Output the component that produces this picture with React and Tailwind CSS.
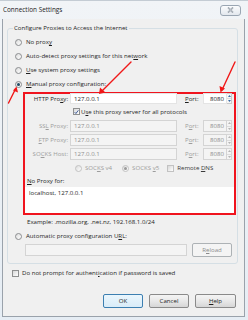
import React from "react";

const font = { fontFamily: '"Open Sans", "Noto Sans", sans-serif' };

function U({ children }) {
  return <span className="underline underline-offset-[1px] decoration-[0.5px]">{children}</span>;
}

function Radio({ checked, disabled }) {
  return (
    <span
      className={`flex w-[7px] h-[7px] shrink-0 items-center justify-center rounded-full border bg-gradient-to-br from-[#dcdcdc] to-[#ffffff] ${
        disabled ? "border-[#c2c2c2]" : "border-[#8b8d8f]"
      }`}
    >
      {checked && (
        <span
          className={`w-[3px] h-[3px] rounded-full ${
            disabled ? "bg-[#9a9a9a]" : "bg-[#1f4a63]"
          }`}
        />
      )}
    </span>
  );
}

function Check({ checked, disabled }) {
  return (
    <span
      className={`flex w-[7px] h-[7px] shrink-0 items-center justify-center border bg-gradient-to-br from-[#d8d8d8] to-[#ffffff] ${
        disabled ? "border-[#c2c2c2]" : "border-[#8e8f8f]"
      }`}
    >
      {checked && (
        <svg width="6" height="6" viewBox="0 0 6 6">
          <path d="M0.8 3.2 L2.3 4.8 L5.2 1" fill="none" stroke="#2f4f8f" strokeWidth="1.1" />
        </svg>
      )}
    </span>
  );
}

function Spinner({ disabled }) {
  const c = disabled ? "#b5b5b5" : "#3c6ea8";
  return (
    <span
      className={`flex h-full w-[5px] flex-col border border-l-0 ${
        disabled ? "border-[#d6d6d6] bg-[#f4f4f4]" : "border-[#c9c9c9] bg-[#f6f6f6]"
      }`}
    >
      <span className="flex flex-1 items-center justify-center border-b border-[#dcdcdc]">
        <svg width="3" height="2" viewBox="0 0 3 2">
          <path d="M0 2 L1.5 0 L3 2Z" fill={c} />
        </svg>
      </span>
      <span className="flex flex-1 items-center justify-center">
        <svg width="3" height="2" viewBox="0 0 3 2">
          <path d="M0 0 L1.5 2 L3 0Z" fill={c} />
        </svg>
      </span>
    </span>
  );
}

function ProxyRow({ label, disabled, first }) {
  return (
    <div className={`flex items-center ${first ? "h-[11px] -mt-[1px]" : "h-[14px]"}`}>
      <span
        className={`w-[43px] text-right whitespace-nowrap ${
          disabled ? "text-[#9d9d9d]" : "text-[#1e1e1e]"
        }`}
      >
        {label}
      </span>
      <span
        className={`ml-[2px] flex w-[107px] items-center px-[3px] ${
          first
            ? "h-[11px] bg-white border border-[#e4e4e4] text-[#1e1e1e]"
            : "h-[12px] bg-[#f4f4f4] border border-[#d4d4d4] text-[#8e8e8e]"
        }`}
      >
        127.0.0.1
      </span>
      <span
        className={`ml-[8px] w-[18px] whitespace-nowrap ${
          disabled ? "text-[#9d9d9d]" : "text-[#1e1e1e]"
        }`}
      >
        {disabled ? (
          <>
            P<U>o</U>rt:
          </>
        ) : (
          <>
            <U>P</U>ort:
          </>
        )}
      </span>
      <span className={`flex ${first ? "h-[11px]" : "h-[12px]"}`}>
        <span
          className={`flex w-[24px] items-center justify-end pr-[2px] ${
            first
              ? "bg-white border border-[#e4e4e4] text-[#1e1e1e]"
              : "bg-[#f4f4f4] border border-[#d4d4d4] text-[#8e8e8e]"
          }`}
        >
          8080
        </span>
        <Spinner disabled={disabled} />
      </span>
    </div>
  );
}

function Button({ children, primary, disabled, className = "" }) {
  return (
    <span
      className={`flex h-[14px] items-center justify-center rounded-[2px] border ${
        primary
          ? "border-[#3c7fb1] bg-gradient-to-b from-[#eaf6fd] to-[#d9ecf8]"
          : disabled
          ? "border-[#adb2b5] bg-[#f4f4f4] text-[#8b8b8b]"
          : "border-[#8a8a8a] bg-gradient-to-b from-[#f4f4f4] via-[#e8e8e8] to-[#d6d6d6]"
      } ${className}`}
    >
      {children}
    </span>
  );
}

export default function App() {
  return (
    <div
      className="relative h-[320px] w-[248px] overflow-hidden bg-gradient-to-b from-[#f1f4f7] to-[#e6edf4] text-[6.1px] leading-[8px] text-[#1e1e1e]"
      style={font}
    >
      {/* title bar */}
      <div className="flex h-[19px] items-center border-t border-[#c4ccd4] pl-[3px] pr-[7px]">
        <span className="text-[6.4px] text-[#1b1b1b]">Connection Settings</span>
        <span className="ml-auto flex h-[11px] w-[21px] items-center justify-center rounded-[3px] border border-[#9aa6b3] bg-gradient-to-b from-[#fbfcfd] to-[#e3e8ee]">
          <svg width="7" height="6" viewBox="0 0 7 6">
            <path d="M1 0.5 L6 5.5 M6 0.5 L1 5.5" stroke="#8c96a0" strokeWidth="1.6" />
            <path d="M1 0.5 L6 5.5 M6 0.5 L1 5.5" stroke="#f4f6f8" strokeWidth="0.5" />
          </svg>
        </span>
      </div>

      {/* dialog body */}
      <div className="ml-[2px] flex h-[298px] w-[243px] flex-col border-x border-b border-[#9aa2ab] bg-[#f0f0f0]">
        <fieldset className="ml-[4px] mt-[5px] w-[231px] rounded-[3px] border border-[#d5dfe5] pb-[6px] pt-[3px]">
          <legend className="ml-[5px] px-[1px] leading-[8px]">
            Configure Proxies to Access the Internet
          </legend>

          <div className="flex h-[14px] items-center pl-[7px]">
            <Radio />
            <span className="ml-[4px]">
              No prox<U>y</U>
            </span>
          </div>
          <div className="flex h-[14px] items-center pl-[7px]">
            <Radio />
            <span className="ml-[4px]">
              Auto-detect proxy settings for this net<U>w</U>ork
            </span>
          </div>
          <div className="flex h-[14px] items-center pl-[7px]">
            <Radio />
            <span className="ml-[4px]">
              <U>U</U>se system proxy settings
            </span>
          </div>
          <div className="flex h-[14px] items-center pl-[7px]">
            <Radio checked />
            <span className="ml-[4px]">
              <U>M</U>anual proxy configuration:
            </span>
          </div>

          {/* highlighted manual section */}
          <div className="ml-[15px] mt-[1px] w-[213px] border-2 border-[#f0141e]">
            <ProxyRow
              first
              label={
                <>
                  HTTP Pro<U>x</U>y:
                </>
              }
            />
            <div className="flex h-[15px] items-center pl-[48px]">
              <Check checked />
              <span className="ml-[1px]">
                U<U>s</U>e this proxy server for all protocols
              </span>
            </div>
            <ProxyRow
              disabled
              label={
                <>
                  SS<U>L</U> Proxy:
                </>
              }
            />
            <ProxyRow
              disabled
              label={
                <>
                  <U>F</U>TP Proxy:
                </>
              }
            />
            <ProxyRow
              disabled
              label={
                <>
                  SO<U>C</U>KS Host:
                </>
              }
            />
            <div className="flex h-[14px] items-center pl-[50px] text-[#9d9d9d]">
              <Radio disabled />
              <span className="ml-[3px]">
                SOC<U>K</U>S v4
              </span>
              <span className="ml-[10px] flex items-center">
                <Radio checked disabled />
                <span className="ml-[3px]">
                  SOCKS <U>v</U>5
                </span>
              </span>
              <span className="ml-[8px] flex items-center">
                <Check disabled />
                <span className="ml-[3px] text-[#3a3a3a]">
                  Remote <U>D</U>NS
                </span>
              </span>
            </div>
            <div className="flex h-[12px] items-center pl-[2px]">
              <span>
                <U>N</U>o Proxy for:
              </span>
            </div>
            <div className="h-[26px] bg-white px-[4px] pt-[2px]">localhost, 127.0.0.1</div>
          </div>

          <div className="flex h-[14px] items-center pl-[19px]">
            Example: .mozilla.org, .net.nz, 192.168.1.0/24
          </div>
          <div className="flex h-[14px] items-center pl-[7px]">
            <Radio />
            <span className="ml-[4px]">
              Automatic proxy configuration U<U>R</U>L:
            </span>
          </div>
          <div className="flex h-[14px] items-center pl-[17px]">
            <span className="h-[12px] w-[162px] border border-[#d4d4d4] bg-[#f4f4f4]" />
            <Button disabled className="ml-[5px] w-[40px]">
              R<U>e</U>load
            </Button>
          </div>
        </fieldset>

        <div className="mt-[2px] flex h-[14px] items-center pl-[9px]">
          <Check />
          <span className="ml-[3px]">
            Do not prompt for authent<U>i</U>cation if password is saved
          </span>
        </div>

        <div className="mt-[14px] flex justify-end gap-[6px] pr-[8px]">
          <Button primary className="w-[40px]">
            OK
          </Button>
          <Button className="w-[40px]">Cancel</Button>
          <Button className="w-[41px]">
            <U>H</U>elp
          </Button>
        </div>
      </div>

      {/* red annotation arrows */}
      <svg className="pointer-events-none absolute left-0 top-0" width="248" height="320">
        <g stroke="#f01818" strokeWidth="1.4" fill="#f01818" strokeLinecap="round">
          <line x1="131" y1="62" x2="101" y2="92" />
          <path d="M99 94 L100 87.5 L105.5 92.5 Z" stroke="none" />
          <line x1="235" y1="62" x2="222" y2="90" />
          <path d="M220.5 92.5 L219.5 86 L225 88.5 Z" stroke="none" />
          <line x1="8.5" y1="103" x2="15.5" y2="89" />
          <path d="M16.5 86.5 L18 92.5 L13 90.5 Z" stroke="none" />
        </g>
      </svg>
    </div>
  );
}
